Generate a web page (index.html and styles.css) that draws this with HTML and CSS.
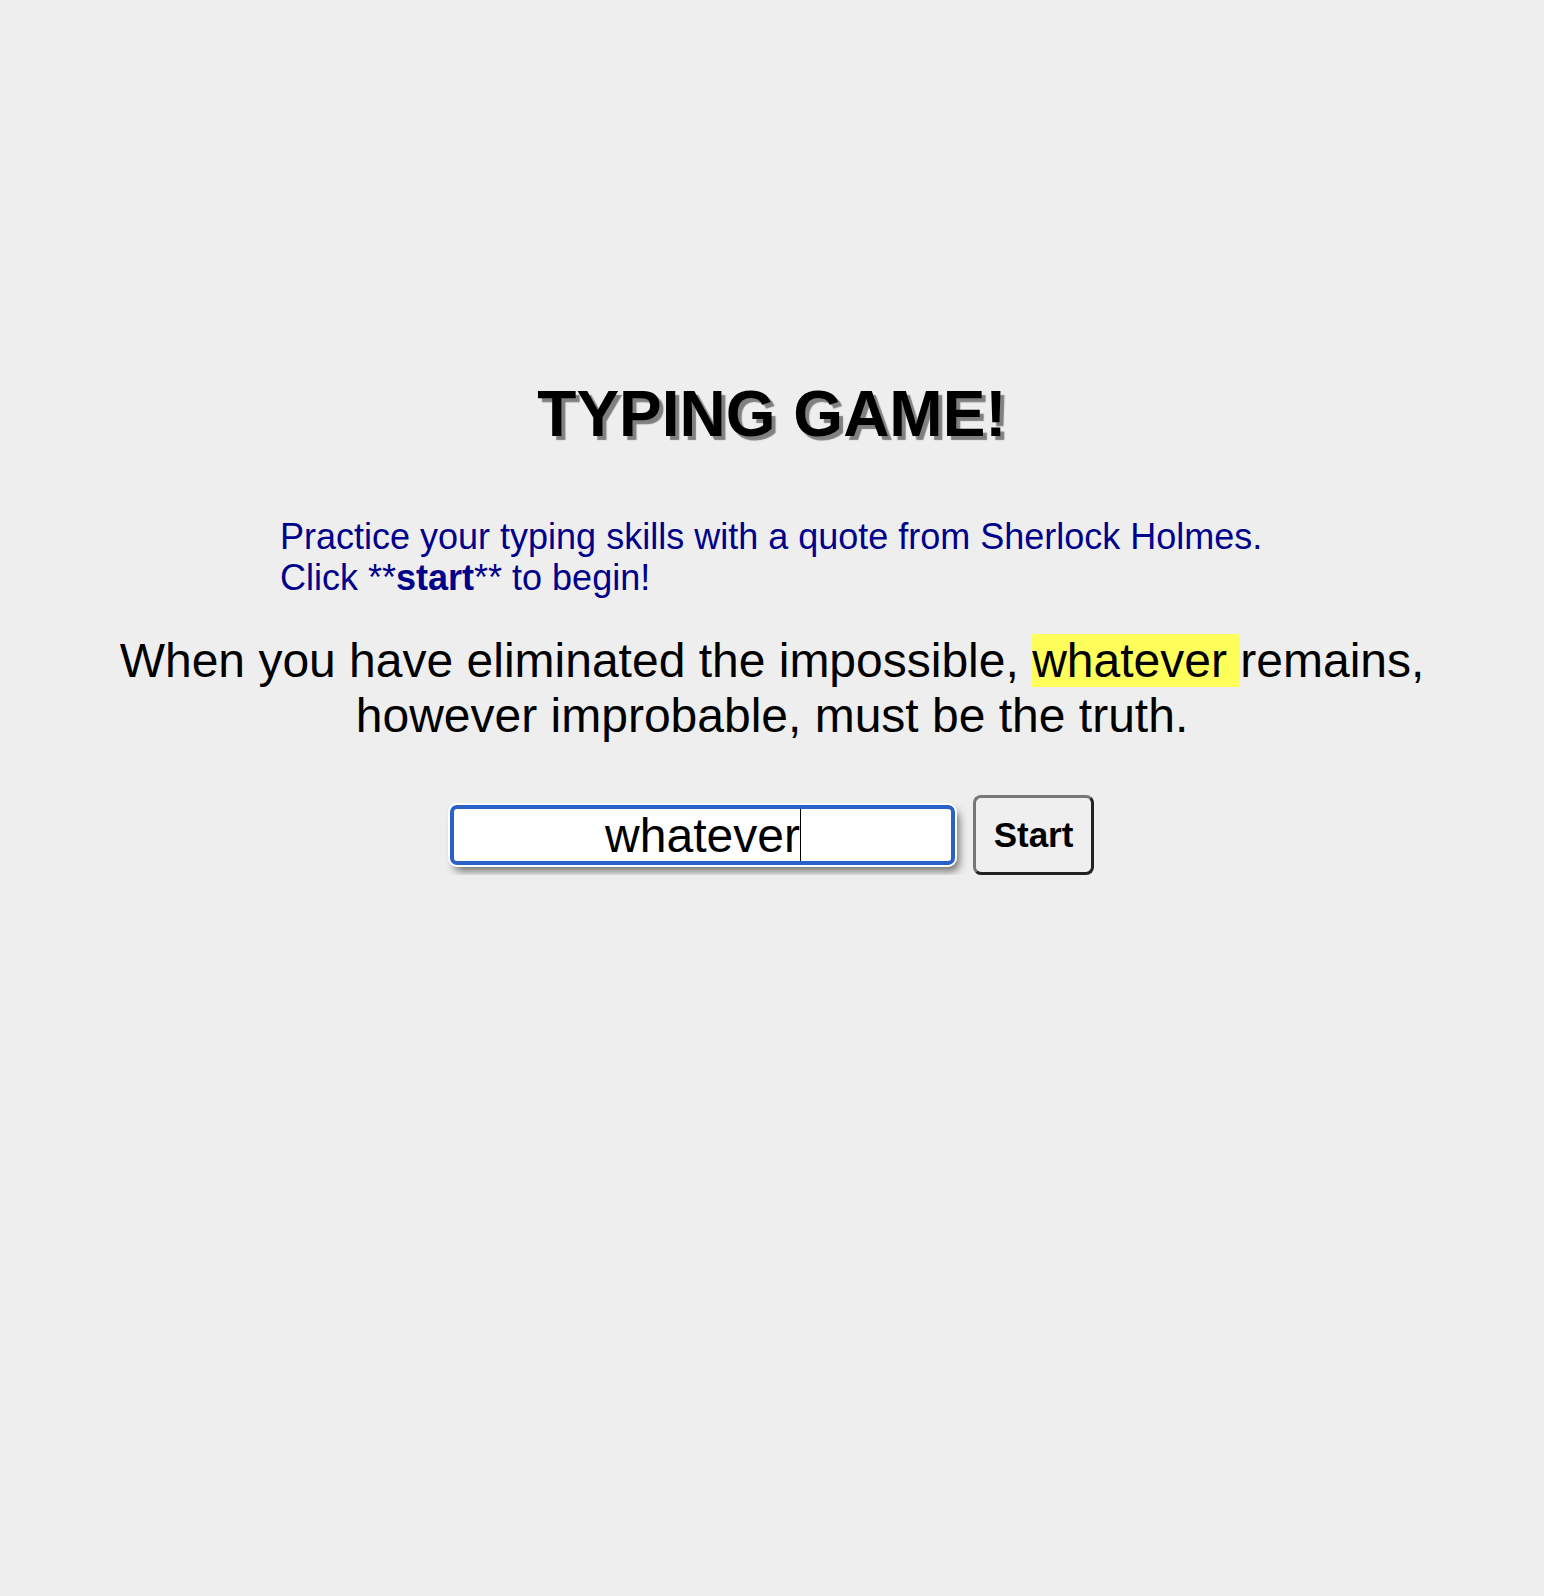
FILE: index.html
```html
<!DOCTYPE html>
<html lang="en">
<head>
<meta charset="utf-8">
<title>Typing Game</title>
<link rel="stylesheet" href="styles.css">
</head>
<body>
<main class="game">
  <h1 class="title">TYPING GAME!</h1>
  <p class="intro">Practice your typing skills with a quote from Sherlock Holmes.<br>Click **<strong>start</strong>** to begin!</p>
  <p class="quote">When you have eliminated the impossible, <span class="highlight">whatever </span>remains, however improbable, must be the truth.</p>
  <div class="controls">
    <div class="field">
      <input class="answer" type="text" value="whatever" aria-label="Type the highlighted word">
      <span class="caret"></span>
    </div>
    <button class="start" type="button">Start</button>
  </div>
</main>
</body>
</html>
```

FILE: styles.css
```css
html, body {
  margin: 0;
  padding: 0;
  background: #eeeeee;
}

body {
  font-family: "Liberation Sans", Arial, Helvetica, sans-serif;
  color: #000;
}

.game {
  padding-top: 377px;
  display: flex;
  flex-direction: column;
  align-items: center;
}

.title {
  margin: 0;
  font-size: 64px;
  line-height: 74px;
  font-weight: bold;
  text-align: center;
  text-shadow: 4px 4px 1px #808080;
}

.intro {
  margin: 65px 0 0;
  width: 984px;
  font-size: 36px;
  line-height: 1.15;
  color: #00008b;
  text-align: left;
}

.intro strong {
  font-weight: bold;
}

.quote {
  margin: 34px 0 0;
  width: 1360px;
  font-size: 48px;
  line-height: 1.15;
  text-align: center;
}

.highlight {
  background: #ffff5c;
}

.controls {
  margin-top: 52px;
  display: flex;
  align-items: center;
  gap: 18px;
}

.field {
  position: relative;
  width: 505px;
  height: 60px;
}

.answer {
  box-sizing: border-box;
  width: 505px;
  height: 60px;
  margin: 0;
  padding: 0;
  border: 4px solid #2a61c8;
  border-radius: 7px;
  background: #ffffff;
  font-family: "Liberation Sans", Arial, Helvetica, sans-serif;
  font-size: 48px;
  color: #000;
  text-align: center;
  outline: none;
  box-shadow: 0 0 0 2px #ffffff, 4px 6px 8px rgba(0, 0, 0, 0.55);
}

.caret {
  position: absolute;
  left: 350px;
  top: 4px;
  width: 1px;
  height: 52px;
  background: #000;
}

.start {
  box-sizing: border-box;
  width: 121px;
  height: 80px;
  margin: 0;
  padding: 0;
  border: 3px solid;
  border-color: #777777 #222222 #222222 #777777;
  border-radius: 8px;
  background: #efefef;
  font-family: "Liberation Sans", Arial, Helvetica, sans-serif;
  font-size: 35px;
  font-weight: bold;
  color: #000;
}
```
